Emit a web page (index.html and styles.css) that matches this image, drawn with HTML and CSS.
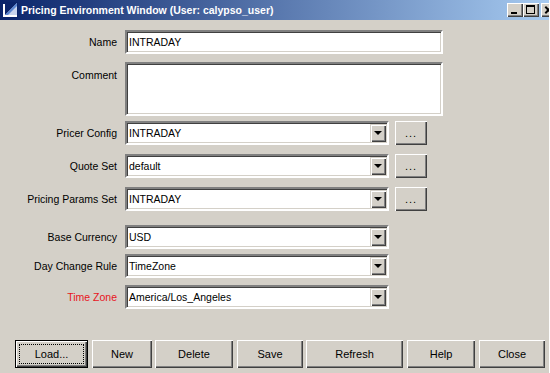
FILE: index.html
```html
<!DOCTYPE html>
<html lang="en">
<head>
  <meta charset="UTF-8" />
  <title>Pricing Environment Window</title>
  <link rel="stylesheet" href="styles.css">
</head>
<body>
  <div class="window">
    <div class="titlebar">
      <svg class="app-icon" width="16" height="16" viewBox="0 0 16 16">
        <rect x="0" y="0" width="16" height="16" fill="#0a246a"/>
        <polygon points="1,15 15,1 15,15" fill="#c8d4ec"/>
        <polygon points="1,15 15,1 15,4 4,15" fill="#5a86d0"/>
        <rect x="1" y="2" width="2" height="13" fill="#ffffff"/>
        <rect x="1" y="13" width="14" height="2" fill="#ffffff"/>
      </svg>
      <span class="title">Pricing Environment Window (User: calypso_user)</span>
      <div class="controls">
        <span class="ctl ctl-min"></span>
        <span class="ctl ctl-max"></span>
        <span class="ctl ctl-close"></span>
      </div>
    </div>

    <div class="form">
      <div class="row row-name">
        <label>Name</label>
        <div class="field field-text">INTRADAY</div>
      </div>
      <div class="row row-comment">
        <label>Comment</label>
        <div class="field field-area"></div>
      </div>
      <div class="row row-pricer">
        <label>Pricer Config</label>
        <div class="field combo">INTRADAY<span class="arrow"></span></div>
        <button class="dots">...</button>
      </div>
      <div class="row row-quote">
        <label>Quote Set</label>
        <div class="field combo">default<span class="arrow"></span></div>
        <button class="dots">...</button>
      </div>
      <div class="row row-params">
        <label>Pricing Params Set</label>
        <div class="field combo">INTRADAY<span class="arrow"></span></div>
        <button class="dots">...</button>
      </div>
      <div class="row row-currency">
        <label>Base Currency</label>
        <div class="field combo">USD<span class="arrow"></span></div>
      </div>
      <div class="row row-dayrule">
        <label>Day Change Rule</label>
        <div class="field combo">TimeZone<span class="arrow"></span></div>
      </div>
      <div class="row row-tz">
        <label class="required">Time Zone</label>
        <div class="field combo">America/Los_Angeles<span class="arrow"></span></div>
      </div>
    </div>

    <div class="buttons">
      <button class="btn btn-load focused"><span class="focus-ring">Load...</span></button>
      <button class="btn btn-new">New</button>
      <button class="btn btn-delete">Delete</button>
      <button class="btn btn-save">Save</button>
      <button class="btn btn-refresh">Refresh</button>
      <button class="btn btn-help">Help</button>
      <button class="btn btn-close">Close</button>
    </div>
  </div>
</body>
</html>
```

FILE: styles.css
```css
body {
  margin: 0;
  padding: 0;
  background: #d4d0c8;
  font-family: 'Liberation Sans', Arial, sans-serif;
  font-size: 10.5px;
  color: #000;
  overflow: hidden;
}

.window {
  width: 550px;
  height: 373px;
  overflow: hidden;
  box-sizing: border-box;
  border-right: 1px solid #ffffff;
  margin-right: 3px;
}

.titlebar {
  height: 20px;
  display: flex;
  align-items: center;
  background: linear-gradient(to right, #0a246a, #a6caf0);
  padding-left: 2px;
  white-space: nowrap;
  overflow: hidden;
}

.app-icon {
  flex: none;
}

.title {
  margin-left: 3px;
  color: #fff;
  font-weight: bold;
  font-size: 10.5px;
  font-family: 'Liberation Sans', Arial, sans-serif;
}

.controls {
  display: flex;
  margin-left: auto;
  margin-right: -8px;
}

.ctl {
  width: 16px;
  height: 14px;
  box-sizing: border-box;
  background: #d4d0c8;
  box-shadow: inset 1px 1px #fff, inset -1px -1px #404040, inset -2px -2px #808080;
  position: relative;
}

.ctl-max {
  margin-right: 2px;
}

.ctl-min::after {
  content: "";
  position: absolute;
  left: 4px;
  bottom: 3px;
  width: 6px;
  height: 2px;
  background: #000;
}

.ctl-max::after {
  content: "";
  position: absolute;
  left: 3px;
  top: 2px;
  width: 9px;
  height: 9px;
  box-sizing: border-box;
  border: 1px solid #000;
  border-top-width: 2px;
}

.ctl-close::before,
.ctl-close::after {
  content: "";
  position: absolute;
  left: 3px;
  top: 6px;
  width: 9px;
  height: 2px;
  background: #000;
  transform: rotate(45deg);
}

.ctl-close::after {
  transform: rotate(-45deg);
}

/* form */
.form {
  display: flex;
  flex-direction: column;
  padding-top: 10px;
}

.row {
  display: grid;
  grid-template-columns: 117px auto auto;
  column-gap: 8px;
  align-items: center;
  justify-content: start;
  height: 24px;
}

.row label {
  text-align: right;
}

.row label.required {
  color: #e8141c;
}

.row-comment { margin-top: 8px; align-items: start; height: 54px; }
.row-comment label { padding-top: 7px; }
.row-pricer { margin-top: 5px; }
.row-quote { margin-top: 9px; }
.row-params { margin-top: 9px; }
.row-currency { margin-top: 14px; }
.row-dayrule { margin-top: 5px; }
.row-tz { margin-top: 7px; }

.field {
  box-sizing: border-box;
  height: 24px;
  background: #fff;
  border-style: solid;
  border-width: 2px;
  border-color: #808080 #fff #fff #808080;
  box-shadow: inset 1px 1px #404040, inset -1px -1px #d4d0c8;
  padding: 0 2px;
  line-height: 20px;
  position: relative;
}

.field-text { width: 318px; }

.field-area {
  width: 318px;
  height: 54px;
}

.combo {
  width: 264px;
}

.arrow {
  position: absolute;
  top: 1px;
  right: 1px;
  width: 16px;
  height: 18px;
  box-sizing: border-box;
  background: #d4d0c8;
  box-shadow: inset 1px 1px #d4d0c8, inset 2px 2px #fff, inset -1px -1px #404040, inset -2px -2px #808080;
}

.arrow::after {
  content: "";
  position: absolute;
  left: 4px;
  top: 7px;
  border-left: 4px solid transparent;
  border-right: 4px solid transparent;
  border-top: 4px solid #000;
}

button {
  font-family: 'Liberation Sans', Arial, sans-serif;
  font-size: 11px;
  color: #000;
  background: #d4d0c8;
  border: none;
  margin: 0;
  padding: 0;
  box-sizing: border-box;
  box-shadow: inset 1px 1px #fff, inset -1px -1px #404040, inset -2px -2px #808080;
}

.dots {
  width: 32px;
  height: 24px;
  margin-left: -2px;
  letter-spacing: 1px;
}

/* bottom buttons */
.buttons {
  display: flex;
  gap: 4px;
  margin-top: 31px;
  padding-left: 15px;
}

.btn {
  height: 28px;
}

.btn-load { width: 73px; }
.btn-new { width: 60px; }
.btn-delete { width: 78px; margin-left: -1px; }
.btn-save { width: 66px; }
.btn-refresh { width: 97px; margin-left: -1px; }
.btn-help { width: 68px; }
.btn-close { width: 66px; }

.btn.focused {
  border: 1px solid #000;
  padding: 3px;
}

.focus-ring {
  display: flex;
  align-items: center;
  justify-content: center;
  height: 100%;
  border: 1px dotted #000;
  box-sizing: border-box;
}
```
